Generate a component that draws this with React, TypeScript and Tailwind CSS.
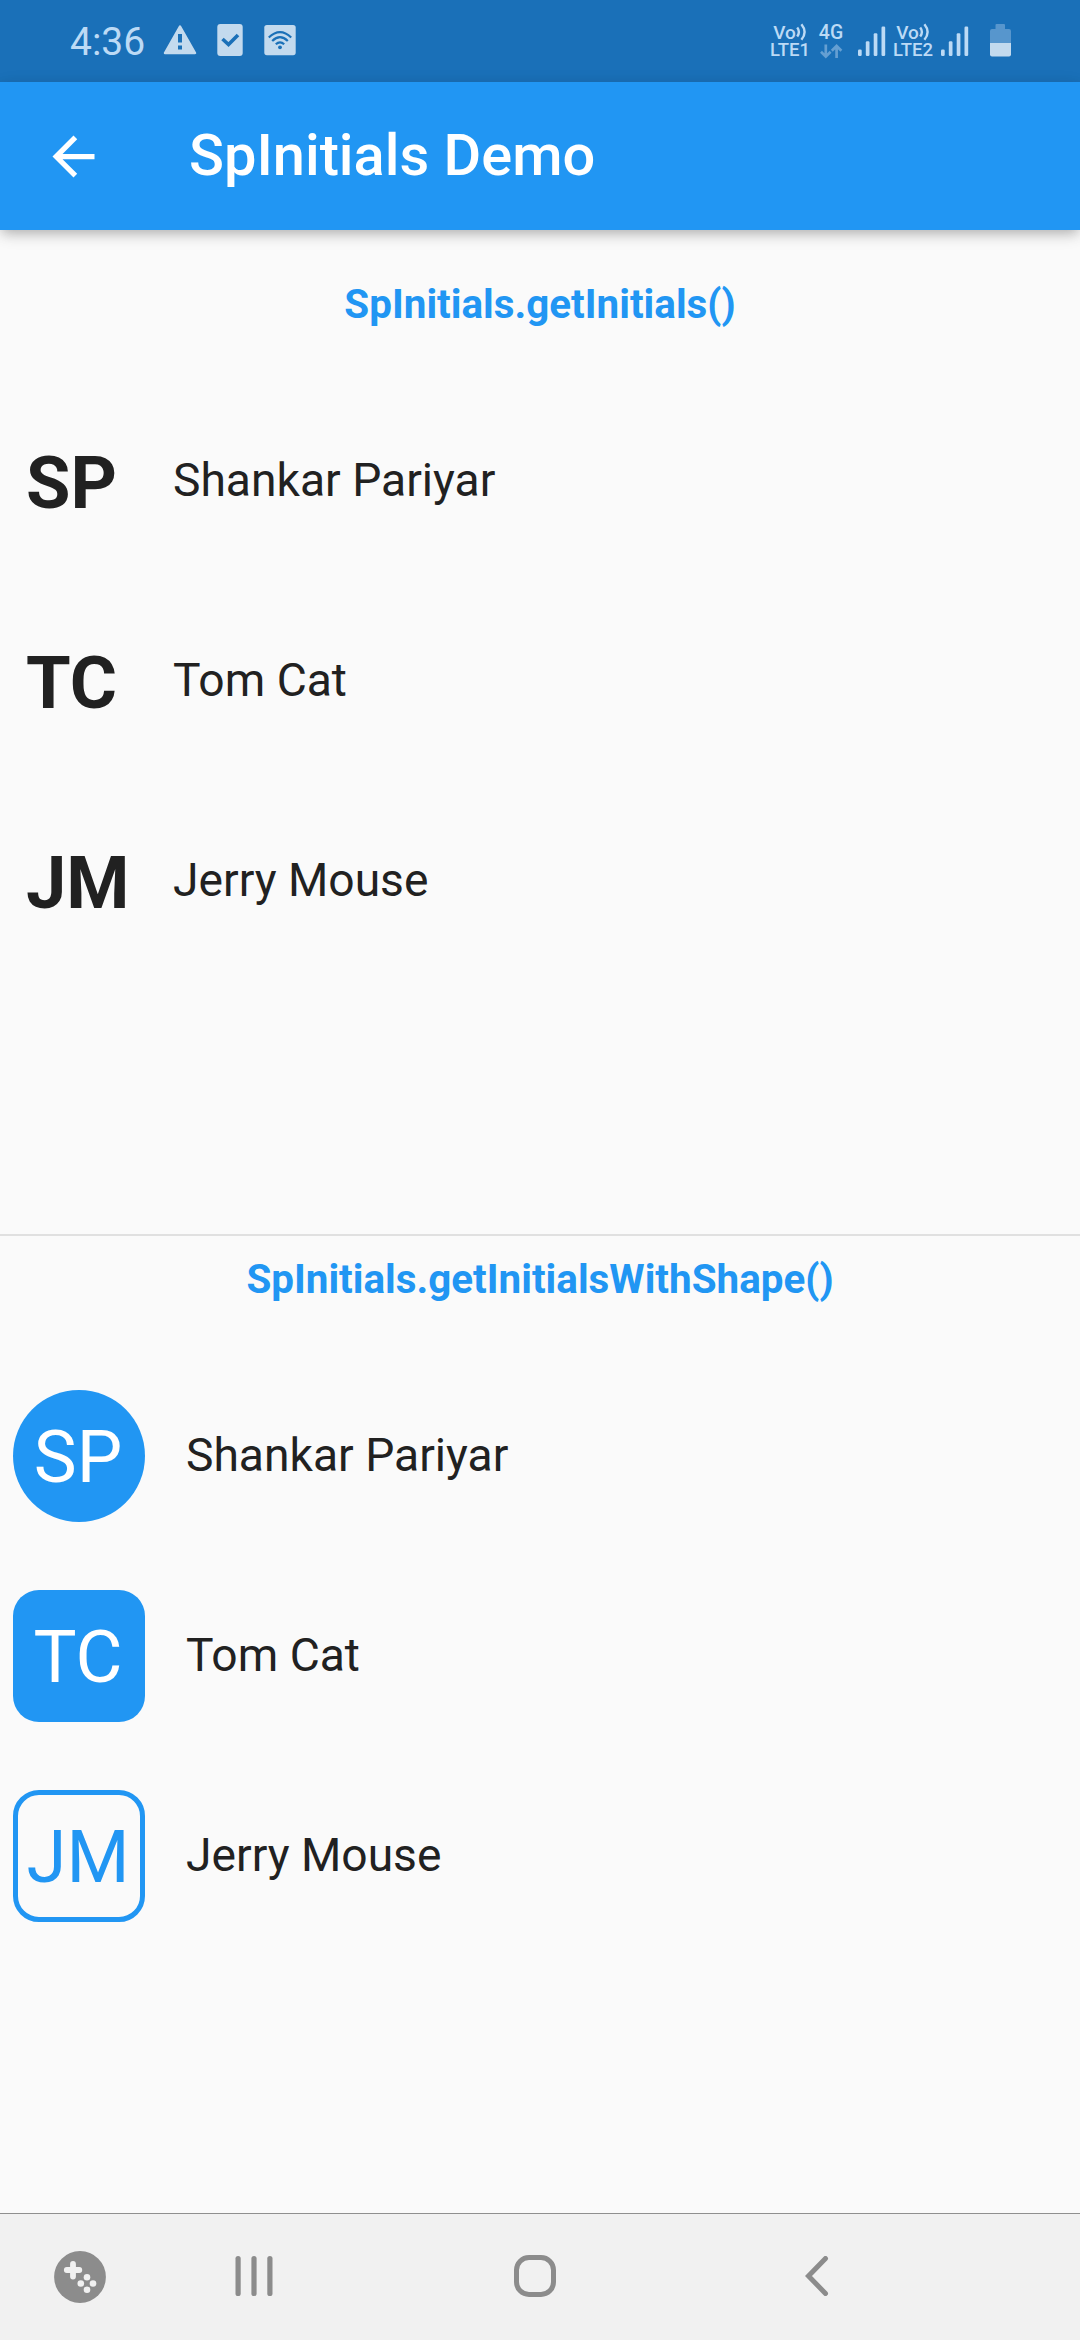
import React from "react";

const people = [
  { initials: "SP", name: "Shankar Pariyar" },
  { initials: "TC", name: "Tom Cat" },
  { initials: "JM", name: "Jerry Mouse" },
];

const shapes = [
  "rounded-full bg-[#2196f3] text-white",
  "rounded-[26px] bg-[#2196f3] text-white",
  "rounded-[26px] border-[5px] border-[#2196f3] text-[#2196f3]",
];

function Signal({ className }: { className: string }) {
  return (
    <svg className={className} width="28" height="31" viewBox="0 0 28 31" fill="#bcdaf5">
      <rect x="0" y="23.5" width="3.7" height="6.5" rx="1.2" />
      <rect x="7.8" y="15.2" width="3.7" height="14.8" rx="1.2" />
      <rect x="15.7" y="7.2" width="3.7" height="22.8" rx="1.2" />
      <rect x="23.5" y="0.6" width="3.7" height="29.4" rx="1.2" />
    </svg>
  );
}

function VoLte({ line, className }: { line: string; className: string }) {
  return (
    <div className={`flex flex-col items-center font-medium text-[#bcdaf5] ${className}`}>
      <div className="flex h-[18px] items-center">
        <span className="text-[19px] leading-[17px]">Vo</span>
        <svg width="11" height="18" viewBox="0 0 11 18" fill="none" stroke="#bcdaf5" strokeWidth="2.4">
          <path d="M1.2 4.6q3.4 4.4 0 8.8M5.400 1.200q6.400 7.800 0 15.600" />
        </svg>
      </div>
      <span className="text-[18.5px] leading-[18px]">{line}</span>
    </div>
  );
}

function StatusBar() {
  return (
    <div className="flex h-[82px] items-start bg-[#1a70b8]">
      <span className="ml-[70px] mt-[19px] w-[93px] text-[39px] leading-[47px] text-[#bcdaf5]">4:36</span>
      <svg className="mt-[24px]" width="34" height="31" viewBox="0 0 34 31">
        <path d="M17 2.5L32 29H2Z" fill="#c3daee" stroke="#c3daee" strokeWidth="2.5" strokeLinejoin="round" />
        <path d="M15 10h4v8.500h-4zM15 21.500h4v4h-4z" fill="#1a70b8" />
      </svg>
      <svg className="ml-[20px] mt-[24px]" width="26" height="32" viewBox="0 0 26 32">
        <rect x="0.300" width="25.400" height="32" rx="3" fill="#c3daee" />
        <path d="M5.500 15L11.500 20.500L21 11" fill="none" stroke="#1a70b8" strokeWidth="3.600" />
      </svg>
      <svg className="ml-[21px] mt-[24.500px]" width="32" height="31" viewBox="0 0 32 31">
        <rect x="0.300" width="31.400" height="30.200" rx="2.600" fill="#c3daee" />
        <g fill="none" stroke="#1a70b8" strokeWidth="2.200">
          <path d="M4.800 12.500Q16 1.800 27.200 12.500" />
          <path d="M8.200 16Q16 8.200 23.800 16" />
          <path d="M11.800 19.300Q16 15.400 20.200 19.300" />
        </g>
        <circle cx="16" cy="22.300" r="1.900" fill="#1a70b8" />
      </svg>
      <VoLte line="LTE1" className="ml-[473px] mt-[23px] w-[42px]" />
      <div className="ml-[7px] mt-[23px] flex w-[26px] flex-col items-center font-medium text-[#bcdaf5]">
        <span className="text-[19.500px] leading-[19px]">4G</span>
        <svg className="mt-[2px]" width="24" height="15" viewBox="0 0 24 15" fill="none" stroke="#659fd2" strokeWidth="2.700">
          <path d="M6.800 0.500v12M2 7.800l4.800 4.800l4.800-4.800M17.600 14V2M12.800 6.800l4.800-4.800l4.800 4.800" />
        </svg>
      </div>
      <Signal className="ml-[14px] mt-[26px]" />
      <VoLte line="LTE2" className="ml-[6px] mt-[23px] w-[42px]" />
      <Signal className="ml-[7px] mt-[26px]" />
      <svg className="ml-[21px] mt-[24px]" width="22" height="33" viewBox="0 0 22 33">
        <path d="M6.500 0h7.500q1 0 1 1v4H19q2 0 2 2v12H0V7q0-2 2-2h3.500V1q0-1 1-1z" fill="#5796cd" />
        <path d="M0 19h21v11.500q0 2-2 2H2q-2 0-2-2z" fill="#c3daee" />
      </svg>
    </div>
  );
}

function AppBar() {
  return (
    <header className="relative z-10 flex h-[148px] items-center bg-[#2196f3] shadow-[0_5px_12px_-2px_rgba(0,0,0,0.26),0_4px_18px_rgba(0,0,0,0.08)]">
      <svg className="ml-[42px]" width="63" height="63" viewBox="0 0 24 24" fill="#fff">
        <path d="M20 11H7.830l5.590-5.590L12 4l-8 8 8 8 1.410-1.410L7.830 13H20v-2z" />
      </svg>
      <h1 className="-mt-[2px] ml-[84px] text-[57.750px] font-medium leading-[68px] text-white">SpInitials Demo</h1>
    </header>
  );
}

export default function App() {
  return (
    <div className="flex h-[2340px] w-[1080px] flex-col overflow-hidden bg-[#fafafa] font-['Roboto',sans-serif] text-[#212121]">
      <StatusBar />
      <AppBar />
      <section className="flex h-[1004px] flex-col pt-[50px]">
        <h2 className="h-[100px] text-center text-[40.400px] font-bold leading-[50px] text-[#2196f3]">SpInitials.getInitials()</h2>
        {people.map((p) => (
          <div key={p.initials} className="flex h-[200px] items-center whitespace-nowrap">
            <span className="ml-[26px] mt-[7px] w-[147px] text-[72.200px] font-bold leading-[84px]">{p.initials}</span>
            <span className="text-[46.200px] leading-[54px]">{p.name}</span>
          </div>
        ))}
      </section>
      <div className="h-[2px] bg-[#e0e0e0]" />
      <section className="flex grow flex-col pt-[19px]">
        <h2 className="h-[100px] text-center text-[40.400px] font-bold leading-[50px] text-[#2196f3]">SpInitials.getInitialsWithShape()</h2>
        {people.map((p, i) => (
          <div key={p.initials} className="flex h-[200px] items-center whitespace-nowrap">
            <div className={`ml-[13px] mt-px flex size-[132px] items-center justify-center ${shapes[i]}`}>
              <span className="-ml-[2px] mt-[4px] text-[72.200px] leading-[82px]">{p.initials}</span>
            </div>
            <span className="ml-[41px] text-[46.200px] leading-[54px]">{p.name}</span>
          </div>
        ))}
      </section>
      <nav className="flex h-[127px] items-start border-t border-[#8f8f8f] bg-[#f1f1f1]">
        <svg className="ml-[54px] mt-[37px]" width="52" height="52" viewBox="0 0 52 52">
          <circle cx="26" cy="26" r="25.900" fill="#8c8c8c" />
          <path d="M19 13v12.500M12.800 19h12.500" stroke="#f1f1f1" strokeWidth="5.800" strokeLinecap="round" />
          <g fill="#f1f1f1">
            <circle cx="33" cy="26.300" r="3.300" />
            <circle cx="26.800" cy="32.500" r="3.300" />
            <circle cx="39" cy="32.500" r="3.300" />
            <circle cx="33" cy="38.800" r="3.300" />
          </g>
        </svg>
        <svg className="ml-[129px] mt-[42px]" width="38" height="40" viewBox="0 0 38 40" fill="#8c8c8c">
          <rect x="0.500" width="5.200" height="40" rx="2.600" />
          <rect x="16.400" width="5.200" height="40" rx="2.600" />
          <rect x="32.300" width="5.200" height="40" rx="2.600" />
        </svg>
        <div className="ml-[241px] mt-[41px] size-[42px] rounded-[15px] border-[5px] border-[#8c8c8c]" />
        <svg className="ml-[249px] mt-[42px]" width="24" height="40" viewBox="0 0 24 40" fill="none" stroke="#8c8c8c" strokeWidth="5" strokeLinecap="round">
          <path d="M20.500 2.500L3.500 20L20.500 37.500" />
        </svg>
      </nav>
    </div>
  );
}
